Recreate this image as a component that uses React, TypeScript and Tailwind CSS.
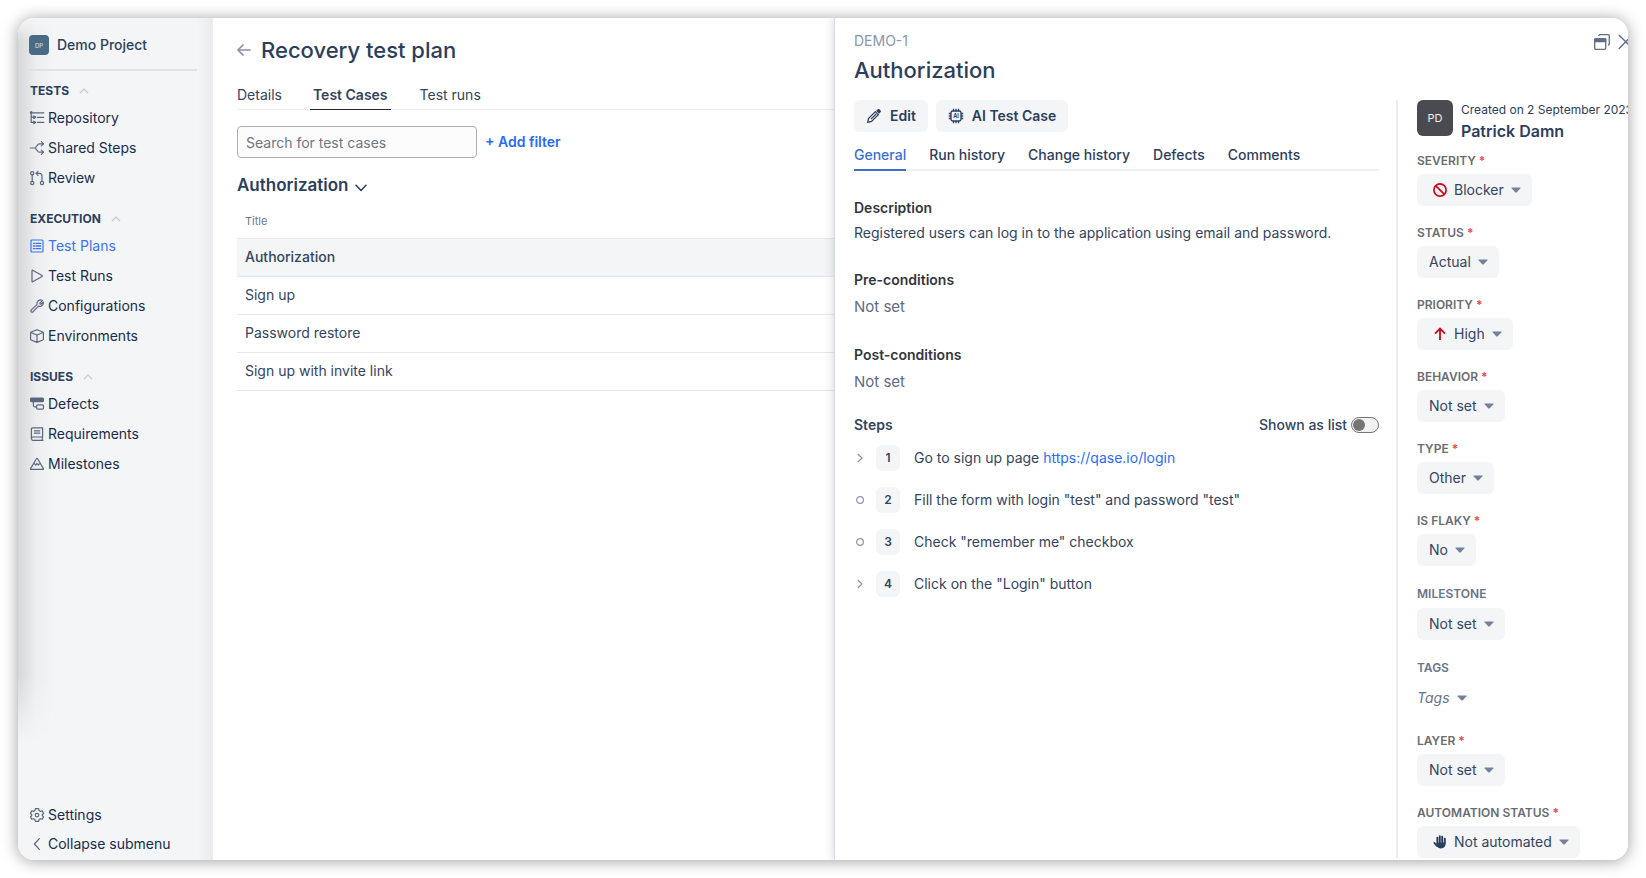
import { useState, type ReactNode } from 'react'

const glyphs: Record<string, ReactNode> = {
  repository: (
    <>
      <path d="M1.2 .8V11.4H5M1.2 6.2H5M1.2 1.8H13.8M7.5 6.4H13.8M7.5 11.4H13.8" />
      <path d="M3.8 5l2 1.2-2 1.2zM3.8 10.2l2 1.2-2 1.2z" fill="currentColor" />
      <circle cx="1.2" cy="1.6" r=".8" fill="currentColor" />
    </>
  ),
  steps: (
    <>
      <path d="M.3 7H5.2L8 3.4Q8.6 2.8 9.5 2.8H13.5M5.2 7L8 10.6Q8.6 11.2 9.5 11.2H13.5" />
      <path d="M11.4.7l2.1 2.1-2.1 2.1M11.4 9.1l2.1 2.1-2.1 2.1" />
    </>
  ),
  review: (
    <>
      <circle cx="2.2" cy="2.2" r="1.6" />
      <circle cx="2.2" cy="12" r="1.6" />
      <circle cx="12" cy="12" r="1.6" />
      <path d="M2.2 3.8v6.6M12 10.4V5Q12 2.4 9.4 2.4H6M8 .4l-2 2 2 2" />
    </>
  ),
  plans: (
    <>
      <rect x="1" y="1" width="12" height="12" rx="1" />
      <path d="M3.4 4.3h1.2M6 4.3h4.7M3.4 7h1.2M6 7h4.7M3.4 9.7h1.2M6 9.7h4.7" strokeWidth="1.3" />
    </>
  ),
  runs: <path d="M2 1.6Q2 .9 2.7 1.2L12 6.5Q12.7 7 12 7.5L2.7 12.8Q2 13.1 2 12.4Z" />,
  config: (
    <path d="M9.9 4.1L12.4 1.6A3.6 3.6 0 0 0 7 5.6L1.1 11.1A1.3 1.3 0 0 0 2.9 12.9L8.5 7.1A3.6 3.6 0 0 0 13.4 3L11 5.2L9.9 4.9Z" />
  ),
  env: (
    <path d="M7 .7L12.8 3Q13.4 3.3 13.4 3.9V10.2Q13.4 10.8 12.8 11L7 13.4L1.2 11Q.6 10.8 .6 10.2V3.9Q.6 3.3 1.2 3ZM.9 3.5L7 6L13.1 3.5M7 6V13.2" />
  ),
  defects: (
    <>
      <rect x=".6" y="1" width="12.9" height="3.6" rx="1" fill="currentColor" />
      <path d="M3.4 5V8.6Q3.4 9.8 4.6 9.8H6.4" />
      <rect x="6.6" y="7.8" width="6.9" height="4.4" rx="1.2" />
    </>
  ),
  requirements: (
    <>
      <path d="M1.4 11.6V2Q1.4.8 2.6.8H12.6V10H2.8A1.7 1.7 0 0 0 2.8 13.3H13M12.3 10V13.3" />
      <path d="M4.4 3.8h5.4M4.4 6.2h5.4" />
    </>
  ),
  milestones: (
    <path d="M6.4 1.8Q7 .9 7.6 1.8L13.4 11.6Q13.8 12.4 13 12.4H1Q.2 12.4 .6 11.6ZM4.2 6.6L5.8 8L7 6.4L8.2 8L9.8 6.6" />
  ),
  settings: (
    <>
      <path d="M5.4.7H8.6L9.1 2.6L10.5 3.4L12.2 2.8L13.6 5.4L12.3 6.4V7.8L13.6 8.7L12.2 11.3L10.5 10.7L9.1 11.5L8.6 13.4H5.4L4.9 11.5L3.5 10.7L1.8 11.3L.4 8.7L1.7 7.8V6.4L.4 5.4L1.8 2.8L3.5 3.4L4.9 2.6Z" />
      <circle cx="7" cy="7.1" r="1.8" />
    </>
  ),
  collapse: <path d="M9.4 1.6L4.4 7L9.4 12.4" />,
}

function Glyph({ name }: { name: string }) {
  return (
    <svg
      aria-hidden="true"
      viewBox="0 0 14 14"
      className="size-[14px] shrink-0 overflow-visible"
      fill="none"
      stroke="currentColor"
      strokeWidth="1.2"
      strokeLinecap="round"
      strokeLinejoin="round"
    >
      {glyphs[name]}
    </svg>
  )
}

const menu = [
  {
    title: 'Tests',
    items: [
      ['repository', 'Repository'],
      ['steps', 'Shared Steps'],
      ['review', 'Review'],
    ],
  },
  {
    title: 'Execution',
    items: [
      ['plans', 'Test Plans'],
      ['runs', 'Test Runs'],
      ['config', 'Configurations'],
      ['env', 'Environments'],
    ],
  },
  {
    title: 'Issues',
    items: [
      ['defects', 'Defects'],
      ['requirements', 'Requirements'],
      ['milestones', 'Milestones'],
    ],
  },
]

function MenuLink({ icon, label, active = false }: { icon: string; label: string; active?: boolean }) {
  return (
    <a
      href="#"
      aria-current={active ? 'page' : undefined}
      className={`flex h-[30px] items-center gap-1 pl-px text-sm ${active ? 'text-[#3c72f5]' : 'text-[#172b4d]'}`}
    >
      <span className={active ? 'text-[#3c72f5]' : 'text-[#5b6780]'}>
        <Glyph name={icon} />
      </span>
      {label}
    </a>
  )
}

function Sidebar() {
  return (
    <aside className="relative flex flex-col bg-[#f4f5f7] pt-[17px] pr-4 pb-[2px] pl-[11px]">
      <div className="pointer-events-none absolute inset-y-0 left-0 w-9 bg-linear-to-r from-black/12 via-black/3 to-transparent mask-[linear-gradient(to_bottom,transparent,black_24px,black_78%,transparent_86%)]" />
      <div className="pointer-events-none absolute inset-y-0 right-0 w-4 bg-linear-to-l from-black/4 to-transparent" />
      <div className="relative flex flex-1 flex-col">
        <div className="flex h-5 items-center gap-2">
          <span className="flex size-5 items-center justify-center rounded bg-[#486b88] text-[6px] text-white/80">DP</span>
          <span className="text-sm font-medium text-[#2c3e5d]">Demo Project</span>
        </div>
        <div className="mt-[14px] h-[2px] bg-[#e0e2e5]" />
        <nav className="mt-3 flex flex-col gap-[18px]">
          {menu.map((group) => (
            <section key={group.title}>
              <h2>
                <button className="flex h-4 items-center gap-[10px] pl-px text-xs font-bold text-[#2c3e5d] uppercase">
                  {group.title}
                  <svg aria-hidden="true" viewBox="0 0 10 6" className="w-[10px]" fill="none" stroke="#c3c8d1" strokeWidth="1.2">
                    <path d="M.8 5.2L5 1L9.2 5.2" />
                  </svg>
                </button>
              </h2>
              <div className="mt-1">
                {group.items.map(([icon, label]) => (
                  <MenuLink key={label} icon={icon} label={label} active={icon === 'plans'} />
                ))}
              </div>
            </section>
          ))}
        </nav>
        <div className="mt-auto">
          <MenuLink icon="settings" label="Settings" />
          <button className="flex h-7 items-center gap-1 pl-px text-sm text-[#172b4d]">
            <span className="text-[#5b6780]">
              <Glyph name="collapse" />
            </span>
            Collapse submenu
          </button>
        </div>
      </div>
    </aside>
  )
}

const cases = ['Authorization', 'Sign up', 'Password restore', 'Sign up with invite link']

function PlanPage() {
  return (
    <main className="min-w-0 overflow-hidden pt-4 pl-6">
      <div className="flex h-8 items-center gap-[10px]">
        <button aria-label="Back" className="text-[#8792a8]">
          <svg viewBox="0 0 14 12" className="w-[14px]" fill="none" stroke="currentColor" strokeWidth="1.7" strokeLinecap="round" strokeLinejoin="round">
            <path d="M13.2 6H1M6 1L1 6L6 11" />
          </svg>
        </button>
        <h1 className="text-[22px] font-medium whitespace-nowrap text-[#2c3e5d]">Recovery test plan</h1>
      </div>
      <div role="tablist" aria-label="Plan" className="mt-[18px] flex border-b border-[#ebecef] text-sm text-[#33445f]">
        <button role="tab" className="h-[25px] pb-[3px]">
          Details
        </button>
        <button role="tab" aria-selected="true" className="-mb-px ml-7 h-[26px] border-b border-[#262a30] px-[3px] pb-[3px] font-semibold">
          Test Cases
        </button>
        <button role="tab" className="ml-[29px] h-[25px] pb-[3px]">
          Test runs
        </button>
      </div>
      <div className="mt-4 flex items-center gap-2">
        <input
          type="search"
          aria-label="Search for test cases"
          placeholder="Search for test cases"
          className="h-8 w-[240px] rounded border border-[#aeaeae] bg-[#fcfcfc] px-2 text-sm placeholder:text-[#6f7683]"
        />
        <button className="text-sm font-semibold whitespace-nowrap text-[#2a6bf8]">+ Add filter</button>
      </div>
      <h2 className="mt-4">
        <button className="flex h-6 items-center gap-[6px] text-[17px] font-semibold text-[#2c3e5d]">
          Authorization
          <svg aria-hidden="true" viewBox="0 0 12 8" className="mt-1 w-3" fill="none" stroke="currentColor" strokeWidth="1.5" strokeLinecap="round" strokeLinejoin="round">
            <path d="M1 1.2L6 6.4L11 1.2" />
          </svg>
        </button>
      </h2>
      <table className="mt-[6px] w-full border-collapse text-left">
        <thead>
          <tr className="h-[34px] border-b border-[#e6e8eb] text-[11px] text-[#6b7490]">
            <th className="px-2 font-normal">Title</th>
          </tr>
        </thead>
        <tbody className="text-sm text-[#33445f]">
          {cases.map((title, i) => (
            <tr key={title} className={`h-[38px] border-b border-[#e6e8eb] ${i === 0 ? 'bg-[#f4f5f7] font-medium' : ''}`}>
              <td className="px-2">{title}</td>
            </tr>
          ))}
        </tbody>
      </table>
    </main>
  )
}

const steps: { text: string; link?: string; nested?: boolean }[] = [
  { text: 'Go to sign up page ', link: 'https://qase.io/login', nested: true },
  { text: 'Fill the form with login "test" and password "test"' },
  { text: 'Check "remember me" checkbox' },
  { text: 'Click on the "Login" button', nested: true },
]

function CaseDetails() {
  const [asList, setAsList] = useState(false)
  return (
    <div className="min-w-0 flex-1 pr-[17px]">
      <div className="flex gap-2 text-sm font-semibold text-[#2c3e5d]">
        <button className="flex h-8 items-center gap-2 rounded-md bg-[#f4f5f7] px-3">
          <svg aria-hidden="true" viewBox="0 0 16 16" className="size-4" fill="currentColor">
            <path d="M10.2 2.8L11.8 1.3Q12.6.6 13.4 1.3L14.6 2.5Q15.4 3.3 14.7 4.1L13.2 5.8Z" />
            <path d="M9.4 3.6L12.4 6.6L5.6 13.4L1.7 14.3L2.6 10.4Z" fill="none" stroke="currentColor" strokeWidth="1.3" strokeLinejoin="round" />
            <path d="M5 11.2L10.2 6" fill="none" stroke="currentColor" strokeWidth="1.2" />
          </svg>
          Edit
        </button>
        <button className="flex h-8 items-center gap-2 rounded-md bg-[#f4f5f7] px-3">
          <svg aria-hidden="true" viewBox="0 0 16 16" className="size-4" fill="none" stroke="currentColor" strokeWidth="1.3">
            <rect x="3" y="3" width="10" height="10" rx="1.8" />
            <path d="M5.5 .8V3M8 .8V3M10.5 .8V3M5.5 13V15.2M8 13V15.2M10.5 13V15.2M.8 5.5H3M.8 8H3M.8 10.5H3M13 5.5H15.2M13 8H15.2M13 10.5H15.2" />
            <text x="8" y="10" textAnchor="middle" fontSize="5.5" fontWeight="700" fill="currentColor" stroke="none">
              AI
            </text>
          </svg>
          AI Test Case
        </button>
      </div>
      <div role="tablist" aria-label="Test case" className="mt-[13px] flex gap-[23px] border-b-2 border-[#eff0f2] text-sm font-medium whitespace-nowrap text-[#2c3e5d]">
        {['General', 'Run history', 'Change history', 'Defects', 'Comments'].map((tab, i) => (
          <button
            key={tab}
            role="tab"
            aria-selected={i === 0}
            className={`-mb-[2px] border-b-2 pb-1 ${i === 0 ? 'border-[#3a70d2] text-[#3a70d2]' : 'border-transparent'}`}
          >
            {tab}
          </button>
        ))}
      </div>
      <section className="mt-[27px] text-sm">
        <h3 className="font-semibold text-[#33363d]">Description</h3>
        <p className="mt-[5px] text-[#33445f]">Registered users can log in to the application using email and password.</p>
      </section>
      <section className="mt-[27px]">
        <h3 className="text-sm font-semibold text-[#33363d]">Pre-conditions</h3>
        <p className="mt-[7px] text-[15px] leading-5 text-[#5f6b85]">Not set</p>
      </section>
      <section className="mt-7">
        <h3 className="text-sm font-semibold text-[#33363d]">Post-conditions</h3>
        <p className="mt-[7px] text-[15px] leading-5 text-[#5f6b85]">Not set</p>
      </section>
      <section className="mt-[23px] text-sm text-[#33445f]">
        <div className="flex items-center justify-between">
          <h3 className="font-semibold">Steps</h3>
          <label className="flex items-center gap-1 font-medium">
            Shown as list
            <input
              type="checkbox"
              role="switch"
              checked={asList}
              onChange={(e) => setAsList(e.target.checked)}
              className="flex h-4 w-7 appearance-none items-center rounded-full border border-[#767676] bg-[#f2f2f2] px-px before:size-3 before:rounded-full before:bg-[#757575] checked:justify-end"
            />
          </label>
        </div>
        <ol className="mt-[10px] flex flex-col gap-4">
          {steps.map((step, i) => (
            <li key={step.text} className="flex h-[26px] items-center">
              <svg aria-hidden="true" viewBox="0 0 12 12" className="w-3" fill="none" stroke="#8a94ab" strokeWidth="1.2">
                {step.nested ? <path d="M3.8 2L8 6L3.8 10" /> : <circle cx="6" cy="6" r="3.4" />}
              </svg>
              <span className="ml-[10px] flex h-[26px] w-6 items-center justify-center rounded-md bg-[#f4f5f7] text-xs font-semibold">
                {i + 1}
              </span>
              <p className="ml-[14px]">
                {step.text}
                {step.link && (
                  <a href="#" className="text-[#2a6bf8]">
                    {step.link}
                  </a>
                )}
              </p>
            </li>
          ))}
        </ol>
      </section>
    </div>
  )
}

const blocker = (
  <svg aria-hidden="true" viewBox="0 0 14 14" className="size-[14px]" fill="none" stroke="#d3061c" strokeWidth="1.7">
    <circle cx="7" cy="7" r="6.1" />
    <path d="M2.8 2.8L11.2 11.2" />
  </svg>
)
const high = (
  <svg aria-hidden="true" viewBox="0 0 14 14" className="size-[14px]" fill="none" stroke="#d3061c" strokeWidth="1.8">
    <path d="M7 13V2M2 6.6L7 1.6L12 6.6" />
  </svg>
)
const hand = (
  <svg aria-hidden="true" viewBox="0 0 14 14" className="size-[14px]" fill="none" stroke="#2c3e5d" strokeWidth="1.9" strokeLinecap="round">
    <path d="M4.4 8V2.6M6.8 8V1.2M9.2 8V1.6M11.8 8V3.6M1.4 8L4 11" />
    <path d="M3.6 7.4H12.6V9Q12.2 13.4 8 13.4Q4.8 13.4 3 10.6Z" fill="#2c3e5d" stroke="none" />
  </svg>
)

const fields: { label: string; value: string; required?: boolean; icon?: ReactNode; plain?: boolean }[] = [
  { label: 'Severity', value: 'Blocker', required: true, icon: blocker },
  { label: 'Status', value: 'Actual', required: true },
  { label: 'Priority', value: 'High', required: true, icon: high },
  { label: 'Behavior', value: 'Not set', required: true },
  { label: 'Type', value: 'Other', required: true },
  { label: 'Is flaky', value: 'No', required: true },
  { label: 'Milestone', value: 'Not set' },
  { label: 'Tags', value: 'Tags', plain: true },
  { label: 'Layer', value: 'Not set', required: true },
  { label: 'Automation status', value: 'Not automated', required: true, icon: hand },
]

function CaseFields() {
  return (
    <div className="w-[232px] shrink-0 overflow-hidden border-l-2 border-[#e9ebee] pl-[19px]">
      <div className="flex gap-2">
        <span className="flex size-9 shrink-0 items-center justify-center rounded-md bg-[#4a4b50] text-[11px] text-white/90">PD</span>
        <div className="pt-[2px] whitespace-nowrap text-[#2c3e5d]">
          <p className="text-xs">Created on 2 September 2023</p>
          <p className="mt-[3px] text-base leading-5 font-semibold">Patrick Damn</p>
        </div>
      </div>
      <div className="mt-3 flex flex-col gap-[19px]">
        {fields.map((f) => {
          const id = f.label.toLowerCase().replace(' ', '-')
          return (
            <div key={f.label}>
              <label
                htmlFor={id}
                className={`flex gap-[3px] text-xs font-semibold uppercase ${f.required ? 'h-4 leading-4 text-[#6a6c71]' : 'h-[18px] leading-[18px] text-[#66748c]'}`}
              >
                <span>{f.label}</span>
                {f.required && <span className="text-[#e5484d]">*</span>}
              </label>
              <div className="relative mt-[5px] w-fit">
                {f.icon && <span className="pointer-events-none absolute top-[9px] left-4">{f.icon}</span>}
                <select
                  id={id}
                  className={`block h-8 appearance-none rounded-md pr-7 text-sm field-sizing-content ${
                    f.plain ? 'pl-0 text-[#66748c] italic' : `bg-[#f4f5f7] text-[#33445f] ${f.icon ? 'pl-[37px]' : 'pl-3'}`
                  }`}
                >
                  <option>{f.value}</option>
                </select>
                <svg aria-hidden="true" viewBox="0 0 10 6" className="pointer-events-none absolute top-[13px] right-[11px] w-[10px]" fill="#74819a">
                  <path d="M1 .4H9Q10 .5 9.4 1.3L5.8 5.2Q5 5.9 4.2 5.2L.6 1.3Q0 .5 1 .4Z" />
                </svg>
              </div>
            </div>
          )
        })}
      </div>
    </div>
  )
}

function CaseDrawer() {
  return (
    <section className="relative flex min-w-0 flex-col border-l border-[#d5d9e0] bg-white pt-[13px] pb-[2px] pl-[19px] shadow-[-2px_0_8px_rgba(23,43,77,0.14)]">
      <header className="flex items-start justify-between">
        <div className="text-[#2c3e5d]">
          <p className="text-sm text-[#8c96aa]">DEMO-1</p>
          <h2 className="mt-[3px] text-[22px] leading-8 font-medium">Authorization</h2>
        </div>
        <div className="-mr-[6px] flex gap-2 pt-[3px] text-[#5e6c88]">
          <button aria-label="Open in a window">
            <svg viewBox="0 0 16 16" className="size-4" fill="none" stroke="currentColor" strokeWidth="1.3" strokeLinejoin="round">
              <rect x=".7" y="4.8" width="11" height="10.5" rx="1.2" />
              <path d="M.7 5h11v2.6H.7z" fill="currentColor" />
              <path d="M4.8 2V1.6Q4.8.7 5.8.7H14.3Q15.3.7 15.3 1.7V10Q15.3 11 14.3 11H14" />
            </svg>
          </button>
          <button aria-label="Close">
            <svg viewBox="0 0 16 16" className="size-4" fill="none" stroke="currentColor" strokeWidth="1.4" strokeLinecap="round">
              <path d="M1.2 1.2L14.4 14.4M14.4 1.2L1.2 14.4" />
            </svg>
          </button>
        </div>
      </header>
      <div className="mt-[14px] flex flex-1">
        <CaseDetails />
        <CaseFields />
      </div>
    </section>
  )
}

export default function App() {
  return (
    <div className="flex min-h-screen bg-white p-[18px] font-[Inter,sans-serif]">
      <div className="grid flex-1 grid-cols-[195px_minmax(0,621fr)_minmax(0,794fr)] overflow-hidden rounded-2xl bg-white shadow-[0_1px_16px_rgba(0,0,0,0.38)]">
        <Sidebar />
        <PlanPage />
        <CaseDrawer />
      </div>
    </div>
  )
}
